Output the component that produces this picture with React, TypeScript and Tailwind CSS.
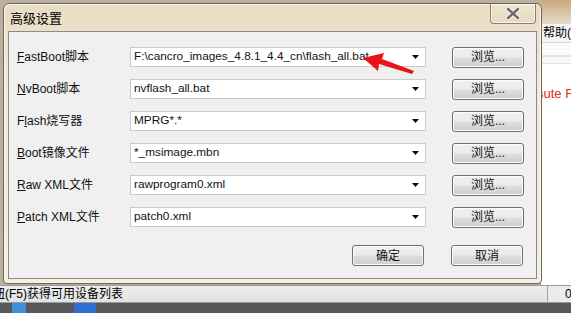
import React from "react";

const rows = [
  { label: "FastBoot脚本", m: "F", rest: "astBoot脚本", value: "F:\\cancro_images_4.8.1_4.4_cn\\flash_all.bat" },
  { label: "NvBoot脚本", m: "N", rest: "vBoot脚本", value: "nvflash_all.bat" },
  { label: "Flash烧写器", m: "F", rest: "lash烧写器", value: "MPRG*.*", underlineIdx: 1 },
  { label: "Boot镜像文件", m: "B", rest: "oot镜像文件", value: "*_msimage.mbn" },
  { label: "Raw XML文件", m: "R", rest: "aw XML文件", value: "rawprogram0.xml" },
  { label: "Patch XML文件", m: "P", rest: "atch XML文件", value: "patch0.xml" },
];

const font = { fontFamily: '"Liberation Sans", "Noto Sans CJK SC", sans-serif' };

function WinButton({ children }: { children: React.ReactNode }) {
  return (
    <div className="flex h-[21px] w-[72px] items-center justify-center rounded-[3px] border border-[#707070] bg-[linear-gradient(#f2f2f2_0%,#ebebeb_48%,#dddddd_52%,#cfcfcf_100%)] text-[12px] text-[#111] shadow-[inset_0_0_0_1px_#fbfbfb]">
      {children}
    </div>
  );
}

function Combo({ value }: { value: string }) {
  return (
    <div className="flex h-[20px] w-[296px] items-center border border-[#c9cbd0] bg-white pl-[3px] pr-[4px] text-[11.8px] text-[#111]">
      <span className="flex-1 truncate">{value}</span>
      <svg width="8" height="4" viewBox="0 0 8 4" className="mr-[1px]">
        <path d="M0 0 H7 L3.5 4 Z" fill="#111" />
      </svg>
    </div>
  );
}

export default function App() {
  return (
    <div className="relative h-[313px] w-[571px] overflow-hidden bg-[#c9b99a]" style={font}>
      {/* background application window */}
      <div className="absolute inset-0 flex flex-col">
        <div className="flex h-[285px] flex-row">
          <div className="w-[541px] shrink-0 bg-[#b8b0a0]" />
          <div className="flex min-w-0 flex-1 flex-col overflow-hidden">
            <div className="h-[24px] bg-[linear-gradient(#c7a97e,#e6dccb)]" />
            <div className="flex h-[18px] items-center whitespace-nowrap bg-[#f5f6f7] pl-[2px] text-[12px] text-black">
              帮助(H)
            </div>
            <div className="h-[1px] bg-[#d8d8d8]" />
            <div className="h-[12px] bg-[#fbfbfb]" />
            <div className="h-[2px] bg-[#e4e6ea]" />
            <div className="h-[6px] bg-[#f6f7f9]" />
            <div className="h-[1px] bg-[#dfe1e5]" />
            <div className="flex h-[221px] flex-col bg-white">
              <div className="ml-[-4px] mt-[20px] whitespace-nowrap text-[13px] text-[#e02b2b]">sute F</div>
            </div>
          </div>
        </div>
        <div className="flex h-[18px] items-center border-y border-[#9a9a9a] bg-[#ebebeb]">
          <div className="flex h-full w-[548px] shrink-0 items-center border-r border-[#a0a0a0] bg-[linear-gradient(#eeeeee,#e2e2e2)]">
            <span className="ml-[-7px] whitespace-nowrap text-[12px] text-black">钮(F5)获得可用设备列表</span>
          </div>
          <span className="ml-[17px] text-[12px] text-black">0</span>
        </div>
        <div className="flex flex-1 bg-[#55575b]">
          <div className="ml-[12px] w-[14px] bg-[#3e8fd6]" />
          <div className="ml-[48px] w-[22px] bg-[#2d6fcf]" />
        </div>
      </div>

      {/* dialog */}
      <div className="absolute left-[3px] top-[3px] flex h-[281px] w-[539px] flex-col rounded-t-[6px] rounded-b-[4px] border border-[#6f6553] bg-[linear-gradient(#e9dcc3,#f2ead9_30%,#f5efe0)] shadow-[inset_0_0_0_1px_#fbf7ee]">
        <div className="relative flex h-[27px] items-center pl-[6px]">
          <span className="text-[13px] text-black" style={{ fontFamily: '"Noto Sans CJK SC", sans-serif' }}>高级设置</span>
          <div className="absolute right-[5px] top-0 flex h-[20px] w-[46px] items-center justify-center rounded-b-[4px] border border-t-0 border-[#8b7f6a] bg-[linear-gradient(#efe4cf,#e6d9bf)] shadow-[inset_0_0_0_1px_#faf5ea]">
            <svg width="14" height="11" viewBox="0 0 14 11">
              <path d="M2 1 L12 10 M12 1 L2 10" stroke="#f7f7f7" strokeWidth="4.2" strokeLinecap="round" />
              <path d="M2 1 L12 10 M12 1 L2 10" stroke="#6b6b6b" strokeWidth="2.4" strokeLinecap="round" />
            </svg>
          </div>
        </div>
        <div className="mx-[4px] mb-[4px] flex flex-1 flex-col border border-[#8a8a8a] bg-[#f0f0f0] pl-[8px] pt-[15px]">
          <div className="flex flex-col gap-[12px]">
            {rows.map((r) => (
              <div key={r.label} className="flex h-[20px] items-center">
                <div className="w-[113px] whitespace-nowrap text-[12px] text-[#111]">
                  {r.underlineIdx === 1 ? (
                    <>
                      F<span className="underline">l</span>ash烧写器
                    </>
                  ) : (
                    <>
                      <span className="underline">{r.m}</span>
                      {r.rest}
                    </>
                  )}
                </div>
                <Combo value={r.value} />
                <div className="ml-[26px]">
                  <WinButton>浏览...</WinButton>
                </div>
              </div>
            ))}
          </div>
          <div className="mt-[18px] flex gap-[27px] pl-[335px]">
            <WinButton>确定</WinButton>
            <WinButton>取消</WinButton>
          </div>
        </div>
      </div>

      {/* red annotation arrow */}
      <svg className="absolute left-[360px] top-[50px]" width="60" height="28" viewBox="0 0 60 28">
        <path d="M3 8 L24 3 L22 9 L54 21 L52 24 L19 14 L18 21 Z" fill="#e8141a" />
      </svg>
    </div>
  );
}
